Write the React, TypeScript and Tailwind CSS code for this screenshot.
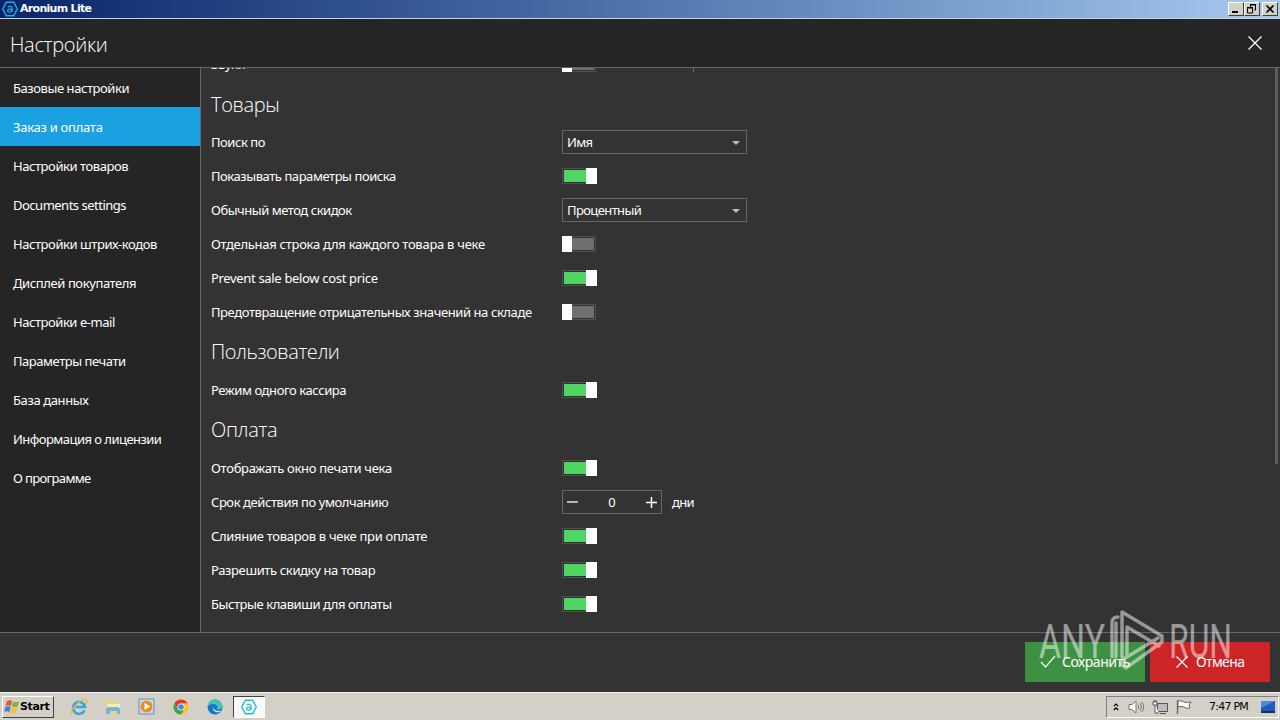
import React from 'react';
import clsx from 'clsx';

interface NavItem {
  label: string;
  track: string;
}

interface SettingRow {
  label: string;
  track: string;
  kind: 'on' | 'off' | 'select' | 'number';
  value?: string;
}

interface Section {
  title: string;
  track: string;
  rows: SettingRow[];
}

const navItems: NavItem[] = [
  { label: 'Базовые настройки', track: 'tracking-[-0.43px]' },
  { label: 'Заказ и оплата', track: 'tracking-[-0.27px]' },
  { label: 'Настройки товаров', track: 'tracking-[-0.43px]' },
  { label: 'Documents settings', track: 'tracking-[-0.5px]' },
  { label: 'Настройки штрих-кодов', track: 'tracking-[-0.43px]' },
  { label: 'Дисплей покупателя', track: 'tracking-[-0.4px]' },
  { label: 'Настройки e-mail', track: 'tracking-[-0.45px]' },
  { label: 'Параметры печати', track: 'tracking-[-0.45px]' },
  { label: 'База данных', track: 'tracking-[-0.38px]' },
  { label: 'Информация о лицензии', track: 'tracking-[-0.53px]' },
  { label: 'О программе', track: 'tracking-[-0.65px]' },
];

const sections: Section[] = [
  {
    title: 'Товары',
    track: 'tracking-[-0.35px] pt-[3px]',
    rows: [
      { label: 'Поиск по', track: 'tracking-[-0.45px]', kind: 'select', value: 'Имя' },
      { label: 'Показывать параметры поиска', track: 'tracking-[-0.44px]', kind: 'on' },
      { label: 'Обычный метод скидок', track: 'tracking-[-0.47px]', kind: 'select', value: 'Процентный' },
      { label: 'Отдельная строка для каждого товара в чеке', track: 'tracking-[-0.27px]', kind: 'off' },
      { label: 'Prevent sale below cost price', track: 'tracking-[-0.33px]', kind: 'on' },
      { label: 'Предотвращение отрицательных значений на складе', track: 'tracking-[-0.41px]', kind: 'off' },
    ],
  },
  {
    title: 'Пользователи',
    track: 'tracking-[-0.45px] pt-px',
    rows: [{ label: 'Режим одного кассира', track: 'tracking-[-0.42px]', kind: 'on' }],
  },
  {
    title: 'Оплата',
    track: 'tracking-[-0.35px] pt-px',
    rows: [
      { label: 'Отображать окно печати чека', track: 'tracking-[-0.3px]', kind: 'on' },
      { label: 'Срок действия по умолчанию', track: 'tracking-[-0.43px]', kind: 'number', value: '0' },
      { label: 'Слияние товаров в чеке при оплате', track: 'tracking-[-0.3px]', kind: 'on' },
      { label: 'Разрешить скидку на товар', track: 'tracking-[-0.36px]', kind: 'on' },
      { label: 'Быстрые клавиши для оплаты', track: 'tracking-[-0.43px]', kind: 'on' },
    ],
  },
];

const AroniumIcon: React.FC<{ className?: string }> = ({ className }) => (
  <svg viewBox="0 0 16 16" className={className} fill="none" stroke="currentColor">
    <path d="M4.3 1.2h7.4L15.3 8l-3.6 6.8H4.3L.7 8z" strokeWidth="1.4" strokeLinejoin="round" />
    <path d="M5.8 6c1-.9 4.2-1 4.2 1v4.1M10 8.2c-2.2-.2-4.4 0-4.4 1.5 0 2 3.3 1.9 4.4 0" strokeWidth="1.3" />
  </svg>
);

const Toggle: React.FC<{ on: boolean }> = ({ on }) =>
  on ? (
    <div className="flex h-4 w-[35px] items-center">
      <div className="h-4 w-6 border border-r-0 border-[#505050] p-px pr-0">
        <div className="h-full bg-[#4fd562]"></div>
      </div>
      <div className="h-4 w-[11px] bg-white"></div>
    </div>
  ) : (
    <div className="flex h-4 w-[34px] items-center">
      <div className="h-4 w-[10px] bg-white"></div>
      <div className="h-4 w-6 border border-l-0 border-[#505050] p-px pl-0">
        <div className="h-full bg-[#6f6f6f]"></div>
      </div>
    </div>
  );

const Select: React.FC<{ value?: string }> = ({ value }) => (
  <div className="flex h-6 w-[185px] items-center justify-between border border-[#666] pr-1.5 pl-1">
    <span className="tracking-[-0.6px]">{value}</span>
    <svg viewBox="0 0 8 4" className="mt-px h-1 w-2" fill="#bdbdbd">
      <path d="M0 0h8L4 4z" />
    </svg>
  </div>
);

const Stepper: React.FC<{ value?: string }> = ({ value }) => (
  <div className="flex items-center">
    <div className="flex h-6 w-[100px] items-center justify-between border border-[#666] px-1">
      <svg viewBox="0 0 11 11" className="h-[11px] w-[11px]" stroke="#fff" strokeWidth="1.3">
        <path d="M0 5h11" />
      </svg>
      <span>{value}</span>
      <svg viewBox="0 0 11 11" className="h-[11px] w-[11px]" stroke="#fff" strokeWidth="1.5">
        <path d="M0 5.5h11M5.5 0v11" />
      </svg>
    </div>
    <span className="ml-[10px] tracking-[-0.7px]">дни</span>
  </div>
);

const Row: React.FC<{ row: SettingRow }> = ({ row }) => (
  <div className="flex h-[34px] items-center">
    <span className={clsx('w-[351px] shrink-0 whitespace-nowrap', row.track)}>{row.label}</span>
    {row.kind === 'select' && <Select value={row.value} />}
    {row.kind === 'number' && <Stepper value={row.value} />}
    {(row.kind === 'on' || row.kind === 'off') && <Toggle on={row.kind === 'on'} />}
  </div>
);

const WinButton: React.FC<{ children: React.ReactNode; className?: string }> = ({ children, className }) => (
  <div className={clsx('h-[14px] w-4 border border-t-white border-r-[#404040] border-b-[#404040] border-l-white bg-[#d4d0c8]', className)}>
    <svg viewBox="0 0 14 12" className="h-3 w-[14px]" fill="none" stroke="#000">
      {children}
    </svg>
  </div>
);

const TitleBar: React.FC = () => (
  <div className="flex h-[18px] shrink-0 items-center bg-linear-to-r from-[#0a246a] to-[#a6caf0] pr-[2px] pl-[2px]">
    <AroniumIcon className="h-4 w-4 text-[#16b5d8]" />
    <span className="ml-[2px] font-['DejaVu_Sans',sans-serif] text-[11px] font-bold tracking-[-0.7px] text-white">Aronium Lite</span>
    <div className="ml-auto flex">
      <WinButton><path d="M3 9h6" strokeWidth="2" /></WinButton>
      <WinButton>
        <path d="M5 1.5h6M5.500 1v3M10.500 1v6H9M5 2h6M2 5h6M2.500 4v6h5V4M2 4.500h6" />
      </WinButton>
      <WinButton className="ml-[2px]"><path d="M3.500 2.500l7 7M10.500 2.500l-7 7" strokeWidth="1.700" /></WinButton>
    </div>
  </div>
);

const Watermark: React.FC = () => (
  <div className="pointer-events-none absolute top-[608px] left-[1039px] flex h-[66px] w-[196px] items-center opacity-50">
    <span className="w-[64px] origin-left scale-x-[0.69] font-['Roboto',sans-serif] text-[49px] leading-none font-normal text-white">ANY</span>
    <svg viewBox="0 0 56 66" className="ml-[7px] h-[66px] w-[56px] shrink-0" fill="none" stroke="#fff" strokeWidth="3.4" strokeLinejoin="round" strokeLinecap="round">
      <path d="M2 49V15c0-4 2-6 6-6" />
      <path d="M6 49V15" />
      <path d="M12 49V4l40 24v6L16 60l-4-3v-5l36-22" />
      <path d="M17 48V19l32 19" />
    </svg>
    <span className="ml-[3px] origin-left scale-x-[0.65] font-['Roboto',sans-serif] text-[49px] leading-none font-normal text-white">RUN</span>
  </div>
);

const TaskBar: React.FC = () => (
  <div className="flex h-7 shrink-0 items-center border-t border-[#f4f2ee] bg-[#d4d0c8] font-['DejaVu_Sans',sans-serif]">
    <div className="ml-[2px] flex h-[22px] w-[52px] items-center border border-t-white border-r-[#404040] border-b-[#404040] border-l-white pl-px">
      <svg viewBox="0 0 16 16" className="h-4 w-4">
        <path d="M3 2c2-1 4-1 5 0L7 7C5 6 3 6 1.500 7z" fill="#e8562a" />
        <path d="M9 2.500c2 1 4 1 6 0L13.500 7.500c-2 1-4 1-5.500 0z" fill="#79b93c" />
        <path d="M1.300 8c2-1 4-1 5.500 0l-1.500 5c-2-1-3.500-1-5 0z" fill="#3f83d0" />
        <path d="M7.800 8.500c2 1 4 1 5.500 0l-1.500 5c-2 1-4 1-5.500 0z" fill="#f4be2c" />
      </svg>
      <span className="text-[11px] font-bold tracking-[-0.4px] text-black">Start</span>
    </div>
    <div className="ml-[16px] flex items-center gap-[16px]">
      {/* Internet Explorer */}
      <svg viewBox="0 0 18 18" className="h-[18px] w-[18px]" fill="none">
        <path d="M14.500 12.500A6 6 0 1 1 15 9H5.500" stroke="#38a5df" strokeWidth="2.600" />
        <path d="M1.500 16C-.5 12 12-1 16.500 2c1 1 .3 2.500-.5 4" stroke="#e9b93b" strokeWidth="1.300" />
      </svg>
      {/* Explorer */}
      <svg viewBox="0 0 18 18" className="h-[18px] w-[18px]">
        <path d="M2 2h5l1 2h8v12H2z" fill="#e9d27c" />
        <path d="M3 6h13v6H3z" fill="#f6ebb4" />
        <path d="M2 16v-4q0-3 3-3h8q3 0 3 3v4h-3v-3H6v3z" fill="#72b5da" />
      </svg>
      {/* Media player */}
      <svg viewBox="0 0 18 18" className="h-[18px] w-[18px]">
        <path d="M1 1h15v15H1z" fill="#c4dcf2" stroke="#5e91c4" />
        <circle cx="8.500" cy="8.500" r="6" fill="#f38a1d" />
        <path d="M6.500 5l6 3.500-6 3.500z" fill="#fff" />
      </svg>
      {/* Chrome */}
      <svg viewBox="0 0 18 18" className="h-[18px] w-[18px]">
        <circle cx="9" cy="9" r="7.500" fill="#fbc116" />
        <path d="M2.500 5.250A7.500 7.500 0 0 1 15.500 5.250H9L5.750 10.900z" fill="#e33b2e" />
        <path d="M2.500 5.250A7.500 7.500 0 0 0 9 16.500L12.250 10.900H5.750z" fill="#2da94f" />
        <circle cx="9" cy="9" r="3.600" fill="#fff" />
        <circle cx="9" cy="9" r="2.800" fill="#4285f4" />
      </svg>
      {/* Edge */}
      <svg viewBox="0 0 18 18" className="h-[18px] w-[18px]">
        <circle cx="9" cy="9" r="7.500" fill="#1674c8" />
        <path d="M1.500 9C2 0 15-1 16.500 8c0 3-3 4-6 3 2-2 0-5-3-5s-5 1-6 3z" fill="#42c7b0" />
        <path d="M7.500 8c-1 3 2 6 8 4.500l-2 1.500c-4 1.500-8-2-6-6z" fill="#d4e6ee" />
      </svg>
    </div>
    <div className="ml-[9px] flex h-[22px] w-8 items-center justify-center border border-t-[#404040] border-r-white border-b-white border-l-[#404040] bg-[#f8f8f6]">
      <AroniumIcon className="h-4 w-4 text-[#19c3cd]" />
    </div>
    <div className="mr-px ml-auto flex h-[22px] w-[173px] items-center border border-t-[#808080] border-r-white border-b-white border-l-[#808080] pl-[6px]">
      <svg viewBox="0 0 7 10" className="h-[10px] w-[6px]" fill="none" stroke="#000" strokeWidth="1.400">
        <path d="M1 4l2.500-2.500L6 4M1 8.500L3.500 6 6 8.500" />
      </svg>
      <svg viewBox="0 0 17 16" className="ml-[9px] h-4 w-[17px]" fill="none" stroke="#777">
        <path d="M1 5.500h3L8 2v12l-4-3.500H1z" fill="#fff" />
        <path d="M10 6q1.500 2 0 4M12 4q3 4 0 8M14 3q3.500 5 0 10" />
      </svg>
      <svg viewBox="0 0 16 16" className="ml-[7px] h-4 w-4" fill="none" stroke="#555">
        <path d="M5.500 4.500h10v8h-10z" fill="#bbb" />
        <path d="M1 3h4v3H1zM2 1v2M4 1v2M3 6v8h4M8 14.500h6" fill="#fff" />
      </svg>
      <svg viewBox="0 0 16 16" className="ml-[8px] h-4 w-4" stroke="#666">
        <path d="M1.500 1v14" strokeWidth="1.400" />
        <path d="M2 2q3-1 6 1 3 1 7 0l-2 3 1 3q-4 1-6-1-3-1-6 0z" fill="#fff" />
      </svg>
      <span className="ml-[17px] w-[42px] text-[11px] tracking-[-0.75px] whitespace-nowrap text-black">7:47 PM</span>
      <svg viewBox="0 0 16 14" className="ml-[9px] h-[14px] w-4">
        <path d="M1 1h14v10H1z" fill="#1d5cb8" />
        <path d="M1 1h14L1 8z" fill="#4c8bdb" />
        <path d="M1 11h14v2H1z" fill="#0d2f63" />
      </svg>
    </div>
  </div>
);

const App: React.FC = () => (
  <div className="relative flex h-[720px] w-[1280px] flex-col overflow-hidden bg-[#252525] font-['Noto_Sans',sans-serif] text-[13px] leading-[18px] text-white">
    <TitleBar />

    {/* Page header */}
    <div className="flex h-[50px] shrink-0 items-center justify-between border-t border-b border-t-[#c8d4e0] border-b-[#666] pr-[17px] pl-[10px]">
      <h1 className="mt-[3px] font-['Open_Sans',sans-serif] text-[20px] leading-7 font-light tracking-[-0.3px]">Настройки</h1>
      <svg viewBox="0 0 16 16" className="h-4 w-4" stroke="#fff" strokeWidth="1.300">
        <path d="M1.500 1.500l13 13M14.500 1.500l-13 13" />
      </svg>
    </div>

    <div className="flex h-[564px] shrink-0">
      <nav className="w-[201px] shrink-0 border-r border-[#666]">
        {navItems.map((item, idx) => (
          <div key={item.label} className={clsx('flex h-[39px] items-center pl-[13px] whitespace-nowrap', item.track, idx === 1 && 'bg-[#1ba1e2]')}>
            {item.label}
          </div>
        ))}
      </nav>

      <main className="relative flex-1 overflow-hidden bg-[#333] pl-[10px]">
        <div className="-mt-[21px] flex h-[34px] items-center">
          <span className="w-[351px] tracking-[-0.4px]">Звуки</span>
          <Toggle on={false} />
          <div className="mt-[9px] ml-[97px] h-[7px] w-px bg-[#5e7370]"></div>
        </div>
        {sections.map((section) => (
          <section key={section.title}>
            <h2 className={clsx("flex h-11 items-center font-['Open_Sans',sans-serif] text-[20px] font-light", section.track)}>{section.title}</h2>
            {section.rows.map((row) => (
              <Row key={row.label} row={row} />
            ))}
          </section>
        ))}
        {/* Scrollbar thumb */}
        <div className="absolute top-0 right-[2px] h-[396px] w-[3px] bg-[#5c5c5c]"></div>
      </main>
    </div>

    {/* Actions */}
    <div className="flex h-[60px] shrink-0 justify-end gap-[5px] border-t border-[#666] bg-[#333] pt-[9px] pr-[10px]">
      <button className="flex h-10 w-[120px] items-center bg-[#3e9142] pl-[15px]">
        <svg viewBox="0 0 16 16" className="h-4 w-4" fill="none" stroke="#fff" strokeWidth="1.200">
          <path d="M1 8l4.500 5L15 2" />
        </svg>
        <span className="ml-[6px] text-[14px] tracking-[-0.45px]">Сохранить</span>
      </button>
      <button className="flex h-10 w-[120px] items-center bg-[#cb2527] pl-[25px]">
        <svg viewBox="0 0 14 14" className="h-[14px] w-[14px]" stroke="#fff" strokeWidth="1.200">
          <path d="M1.500 1.500l11 11M12.500 1.500l-11 11" />
        </svg>
        <span className="ml-[7px] text-[14px] tracking-[-0.6px]">Отмена</span>
      </button>
    </div>

    <TaskBar />
    <Watermark />
  </div>
);

export default App;
